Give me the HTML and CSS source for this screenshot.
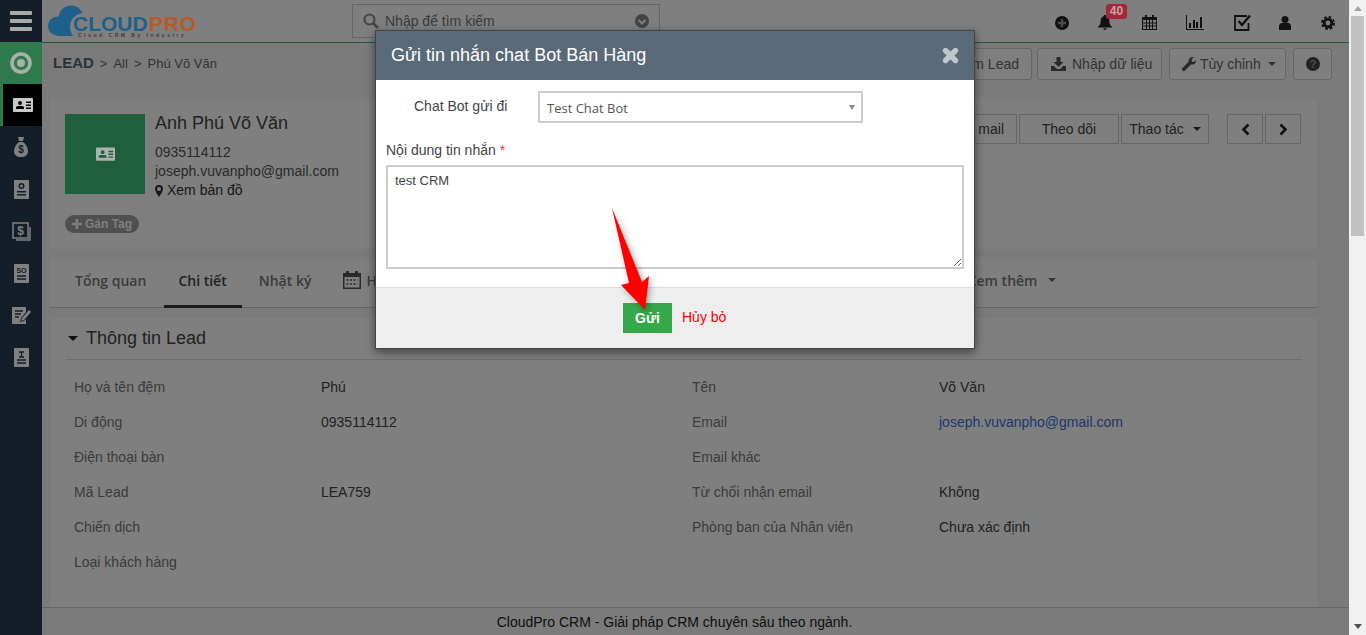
FILE: index.html
```html
<!DOCTYPE html>
<html lang="vi">
<head>
    <meta charset="UTF-8">
    <meta name="viewport" content="width=device-width, initial-scale=1.0">
    <title>CloudPro CRM - Lead</title>
    <link rel="stylesheet" href="styles.css">
</head>
<body>
<div class="app">
    <aside class="sidebar">
        <div class="side-item">
            <svg width="22" height="20" viewBox="0 0 22 20"><g fill="#a9a9a9"><rect y="0" width="22" height="4" rx="1"/><rect y="8" width="22" height="4" rx="1"/><rect y="16" width="22" height="4" rx="1"/></g></svg>
        </div>
        <div class="side-item side-home">
            <svg width="22" height="22" viewBox="0 0 22 22"><circle cx="11" cy="11" r="9" fill="none" stroke="#a9b0aa" stroke-width="3.6"/><circle cx="11" cy="11" r="4" fill="#a9b0aa"/></svg>
        </div>
        <div class="side-item side-active">
            <svg width="20" height="15" viewBox="0 0 20 15"><path fill="#c9c9c9" fill-rule="evenodd" d="M1 0h18a1 1 0 0 1 1 1v12a1 1 0 0 1-1 1H1a1 1 0 0 1-1-1V1a1 1 0 0 1 1-1zm6 3a2 2 0 1 0 0 4 2 2 0 0 0 0-4zM3 11h8V9.500Q11 8 9 8H5Q3 8 3 9.500zm10-7.500v1.500h5V3.500zm0 3v1.500h5V6.500zm0 3v1.500h5V9.500z"/></svg>
        </div>
        <div class="side-item">
            <svg width="14" height="20" viewBox="0 0 14 20"><path fill="#808080" d="M4 0h6L9 4H5zM5 5h4c3 2 5 6 5 9 0 4-3 6-7 6s-7-2-7-6c0-3 2-7 5-9z"/><text x="7" y="16" text-anchor="middle" class="side-glyph">$</text></svg>
        </div>
        <div class="side-item">
            <svg width="15" height="19" viewBox="0 0 15 19"><path fill="#808080" fill-rule="evenodd" d="M1 0h13a1 1 0 0 1 1 1v17a1 1 0 0 1-1 1H1a1 1 0 0 1-1-1V1a1 1 0 0 1 1-1zm6.500 3a3 3 0 1 0 0 6 3 3 0 0 0 0-6zm0 1.500a1.500 1.500 0 1 1 0 3 1.500 1.500 0 0 1 0-3zM3 11v1.500h9V11zm0 3v1.500h9V14z"/></svg>
        </div>
        <div class="side-item">
            <svg width="19" height="19" viewBox="0 0 19 19"><path fill="none" stroke="#808080" stroke-width="1.500" d="M1 1h15v15H1zM18 5v13H4"/><text x="8.500" y="13" text-anchor="middle" class="side-glyph side-glyph-big">$</text></svg>
        </div>
        <div class="side-item">
            <svg width="15" height="19" viewBox="0 0 15 19"><rect width="15" height="19" rx="1" fill="#808080"/><text x="7.500" y="9" text-anchor="middle" class="side-glyph side-glyph-so">SO</text><path stroke="#141e28" stroke-width="1.300" d="M3 12h9M3 15h9"/></svg>
        </div>
        <div class="side-item">
            <svg width="19" height="18" viewBox="0 0 19 18"><path fill="#808080" d="M0 1h14v5l-5 6-1 4 4-1 2-2v5H0z"/><path fill="#808080" d="M10 12l7-8 2 2-7 8-3 1z"/><path stroke="#141e28" stroke-width="1.300" d="M3 5h8M3 8h6M3 11h4"/></svg>
        </div>
        <div class="side-item">
            <svg width="15" height="19" viewBox="0 0 15 19"><rect width="15" height="19" rx="1" fill="#808080"/><path stroke="#141e28" stroke-width="1.300" d="M5 4h5M7.500 4v5M5 9h5M3 12h9M3 15h9"/></svg>
        </div>
    </aside>

    <div class="main">
        <header class="topbar">
            <div class="logo">
                <svg class="logo-cloud" width="44" height="32" viewBox="0 0 44 32"><g fill="#1f5f8c"><circle cx="9.500" cy="21" r="9.500"/><circle cx="23" cy="13" r="12.500"/><rect x="9" y="18" width="22" height="13"/></g><circle cx="36" cy="22" r="14" fill="#7f7f7f"/></svg>
                <div class="logo-text"><span class="logo-cloud-word">CLOUD</span><span class="logo-pro">PRO</span></div>
                <div class="logo-sub">Cloud CRM By Industry</div>
            </div>
            <div class="search">
                <svg width="16" height="16" viewBox="0 0 16 16"><circle cx="6.500" cy="6.500" r="5" fill="none" stroke="#8a8a8a" stroke-width="2.200"/><path stroke="#8a8a8a" stroke-width="2.800" d="M10.500 10.500l4.500 4.500"/></svg>
                <span class="search-text">Nhập để tìm kiếm</span>
                <svg width="14" height="14" viewBox="0 0 14 14"><circle cx="7" cy="7" r="7" fill="#888"/><path fill="none" stroke="#fff" stroke-width="2" d="M3.500 6L7 9.500 10.500 6"/></svg>
            </div>
            <div class="top-icons">
                <span class="top-icon"><svg width="14" height="14" viewBox="0 0 14 14"><circle cx="7" cy="7" r="7" fill="#222"/><path stroke="#999" stroke-width="2.400" d="M3 7h8M7 3v8"/></svg></span>
                <span class="top-icon top-bell">
                    <svg width="14" height="15" viewBox="0 0 15 16"><path fill="#222" d="M7.500 0C8.300 0 9 .6 9 1.400c2.200.7 3.200 2.700 3.200 5 0 3.600 1.200 4.800 2.800 6.100v.8H0v-.8c1.600-1.300 2.800-2.500 2.800-6.100 0-2.300 1-4.300 3.200-5C6 .6 6.700 0 7.500 0zM5.700 14.200h3.600a1.800 1.800 0 0 1-3.600 0z"/></svg>
                    <span class="badge">40</span>
                </span>
                <span class="top-icon top-cal"><svg width="15" height="15" viewBox="0 0 15 15"><path fill="#222" fill-rule="evenodd" d="M3 0h2v2h5V0h2v2h3v13H0V2h3zM1 5v9h13V5z"/><path stroke="#222" d="M1 8h13M1 11h13M4.500 5v9M7.500 5v9M10.500 5v9"/></svg></span>
                <span class="top-icon top-chart"><svg width="18" height="15" viewBox="0 0 18 15"><path fill="#222" d="M0 0h1v14h17v1H0zM3 8h2v5H3zM7 5h2v8H7zM10 7h2v6h-2zM14 2h2v11h-2z"/></svg></span>
                <span class="top-icon top-check"><svg width="17" height="17" viewBox="0 0 17 17"><path fill="none" stroke="#222" stroke-width="1.800" d="M14.500 9v7H1V2h12"/><path fill="none" stroke="#222" stroke-width="2.400" d="M4.500 7l3.500 4L16 1.500"/></svg></span>
                <span class="top-icon"><svg width="12" height="14" viewBox="0 0 12 14"><circle cx="6" cy="3.500" r="3.500" fill="#222"/><path fill="#222" d="M0 14v-3.500C0 8.500 1.500 7 3 7h6c1.500 0 3 1.500 3 3.500V14z"/></svg></span>
                <span class="top-icon"><svg width="14" height="14" viewBox="0 0 14 14"><circle cx="7" cy="7" r="3.800" fill="none" stroke="#222" stroke-width="2.800"/><circle cx="7" cy="7" r="6" fill="none" stroke="#222" stroke-width="2" stroke-dasharray="2.600 2.110"/></svg></span>
            </div>
        </header>

        <div class="page-head">
            <div class="crumbs">
                <b>LEAD</b><span class="sep">&gt;</span><span>All</span><span class="sep">&gt;</span><span>Phú Võ Văn</span>
            </div>
            <div class="head-actions">
                <button class="btn btn-add">Thêm Lead</button>
                <button class="btn btn-import">
                    <svg width="15" height="14" viewBox="0 0 15 14"><path fill="#555" d="M5.500 0h4v5h3L7.500 10 2.500 5h3zM0 9h3l3 3h3l3-3h3v5H0z"/></svg>
                    Nhập dữ liệu
                </button>
                <button class="btn btn-custom">
                    <svg width="14" height="14" viewBox="0 0 14 14"><path fill="#555" d="M13.800 3.200c.5 2-.9 4.300-3.200 4.300-.5 0-.9-.1-1.300-.2L3 13.500c-.8.700-1.900.7-2.500 0-.7-.7-.7-1.700 0-2.500l6.200-6.200C6.100 2.500 8 0 10.500 0c.5 0 .9.100 1.300.2L9.500 2.600l.5 1.900 1.900.5z"/></svg>
                    Tùy chỉnh <i class="caret"></i>
                </button>
                <button class="btn btn-help">
                    <svg width="14" height="14" viewBox="0 0 14 14"><circle cx="7" cy="7" r="7" fill="#444"/><text x="7" y="11" text-anchor="middle" class="help-glyph">?</text></svg>
                </button>
            </div>
        </div>

        <section class="summary">
            <div class="summary-top">
                <div class="avatar">
                    <svg class="avatar-icon" width="19" height="15" viewBox="0 0 20 15"><path fill="#a8b4ae" fill-rule="evenodd" d="M1 0h18a1 1 0 0 1 1 1v12a1 1 0 0 1-1 1H1a1 1 0 0 1-1-1V1a1 1 0 0 1 1-1zm6 3a2 2 0 1 0 0 4 2 2 0 0 0 0-4zM3 11h8V9.500Q11 8 9 8H5Q3 8 3 9.500zm10-7.500v1.500h5V3.500zm0 3v1.500h5V6.500zm0 3v1.500h5V9.500z"/></svg>
                </div>
                <div class="person">
                    <div class="person-name">Anh Phú Võ Văn</div>
                    <div class="person-line">0935114112</div>
                    <div class="person-line">joseph.vuvanpho@gmail.com</div>
                    <div class="person-line person-map">
                        <svg width="8" height="12" viewBox="0 0 8 12"><path fill="#333" fill-rule="evenodd" d="M4 0a4 4 0 0 1 4 4c0 2-2 5-4 8-2-3-4-6-4-8a4 4 0 0 1 4-4zm0 2a2 2 0 1 0 0 4 2 2 0 0 0 0-4z"/></svg>
                        Xem bản đồ
                    </div>
                </div>
                <div class="summary-actions">
                    <button class="btn btn-sm">Gửi mail</button>
                    <button class="btn btn-sm btn-follow">Theo dõi</button>
                    <button class="btn btn-sm btn-more">Thao tác <i class="caret caret-dark"></i></button>
                    <div class="pager">
                        <button class="btn btn-sm btn-page"><svg width="9" height="13" viewBox="0 0 9 13"><path fill="none" stroke="#222" stroke-width="2.600" d="M7.500 1.500l-5 5 5 5"/></svg></button>
                        <button class="btn btn-sm btn-page"><svg width="9" height="13" viewBox="0 0 9 13"><path fill="none" stroke="#222" stroke-width="2.600" d="M1.500 1.500l5 5-5 5"/></svg></button>
                    </div>
                </div>
            </div>
            <span class="tag-pill">
                <svg width="10" height="10" viewBox="0 0 10 10"><path stroke="#fff" stroke-width="2.600" d="M0 5h10M5 0v10"/></svg>
                Gán Tag
            </span>
        </section>

        <nav class="tabs">
            <a class="tab">Tổng quan</a>
            <a class="tab tab-active">Chi tiết</a>
            <a class="tab tab-log">Nhật ký</a>
            <a class="tab tab-icon">
                <svg width="18" height="18" viewBox="0 0 18 18"><path fill="#555" fill-rule="evenodd" d="M3 0h3v2h6V0h3v2h3v16H0V2h3zM1.500 6v10.500h15V6z"/><path stroke="#555" stroke-width="1.600" stroke-dasharray="2 1.500" d="M3.500 9h11M3.500 13h11"/></svg>
                Hoạt động
            </a>
            <a class="tab tab-last">Xem thêm <i class="caret"></i></a>
        </nav>

        <section class="card">
            <h2 class="card-title"><i class="caret caret-title"></i>Thông tin Lead</h2>
            <div class="fields">
                <span class="f-label">Họ và tên đệm</span><span class="f-value">Phú</span>
                <span class="f-label">Tên</span><span class="f-value">Võ Văn</span>
                <span class="f-label">Di động</span><span class="f-value">0935114112</span>
                <span class="f-label">Email</span><span class="f-value f-link">joseph.vuvanpho@gmail.com</span>
                <span class="f-label">Điện thoại bàn</span><span class="f-value"></span>
                <span class="f-label">Email khác</span><span class="f-value"></span>
                <span class="f-label">Mã Lead</span><span class="f-value">LEA759</span>
                <span class="f-label">Từ chối nhận email</span><span class="f-value">Không</span>
                <span class="f-label">Chiến dịch</span><span class="f-value"></span>
                <span class="f-label">Phòng ban của Nhân viên</span><span class="f-value">Chưa xác định</span>
                <span class="f-label">Loại khách hàng</span><span class="f-value"></span>
            </div>
        </section>

        <footer class="footer">CloudPro CRM - Giải pháp CRM chuyên sâu theo ngành.</footer>
        <div class="overlay"></div>
    </div>

    <div class="scrollbar">
        <i class="sb-up"></i>
        <div class="sb-track"><div class="sb-thumb"></div></div>
        <i class="sb-down"></i>
    </div>

    <div class="modal">
        <div class="modal-head">
            <span>Gửi tin nhắn chat Bot Bán Hàng</span>
            <svg width="17" height="17" viewBox="0 0 17 17"><path stroke="#bfc6cc" stroke-width="5.400" stroke-linecap="round" d="M3.500 3.500l10 10M13.500 3.500l-10 10"/></svg>
        </div>
        <div class="modal-body">
            <div class="bot-row">
                <label class="bot-label">Chat Bot gửi đi</label>
                <div class="fake-select">Test Chat Bot<i class="select-arrow"></i></div>
            </div>
            <label class="msg-label">Nội dung tin nhắn <em>*</em></label>
            <textarea class="msg-input">test CRM</textarea>
        </div>
        <div class="modal-foot">
            <button class="btn-send">Gửi</button>
            <a class="cancel">Hủy bỏ</a>
        </div>
    </div>

    <svg class="arrow" width="60" height="125" viewBox="0 0 60 125"><path fill="#ff0000" d="M5 3 L35 77 L42 71 L38 105 L14 80 L22 78 Z"/></svg>
</div>
</body>
</html>
```

FILE: styles.css
```css
* { box-sizing: border-box; }
html, body { margin: 0; padding: 0; height: 100%; overflow: hidden; }
body { font-family: "Liberation Sans", Arial, sans-serif; font-size: 14px; color: #333; background: #f7f7f7; }
i, em { font-style: normal; }

.app { position: relative; display: flex; width: 1366px; height: 635px; overflow: hidden; }

/* sidebar */
.sidebar { width: 42px; flex: none; background: #141e28; }
.side-item { height: 42px; display: flex; align-items: center; justify-content: center; }
.side-home { background: #2f7a4c; }
.side-active { background: #000; border-left: 3px solid #2f7a4c; }
.side-glyph { font: bold 10px "Liberation Sans", sans-serif; fill: #141e28; }
.side-glyph-big { font-size: 12px; fill: #808080; }
.side-glyph-so { font-size: 7px; }

/* main column */
.main { position: relative; flex: 1; min-width: 0; display: flex; flex-direction: column; background: #f7f7f7; }
.overlay { position: absolute; top: 0; left: 0; right: 0; bottom: 0; background: rgba(0, 0, 0, 0.5); z-index: 5; }

.topbar { height: 43px; flex: none; display: flex; align-items: center; background: #fff; border-bottom: 1px solid #3cb371; }
.logo { position: relative; z-index: 6; width: 310px; height: 42px; flex: none; }
.logo-cloud { position: absolute; left: 6px; top: 5px; }
.logo-text { position: absolute; left: 31px; top: 15px; font: bold 21px/18px "Liberation Sans", sans-serif; white-space: nowrap; }
.logo-cloud-word { color: #1f5f8c; }
.logo-pro { color: #b8592a; margin-left: 1px; letter-spacing: 1px; }
.logo-sub { position: absolute; left: 36px; top: 33px; font: bold 5px/5px "Liberation Sans", sans-serif; letter-spacing: 2.500px; color: #3c3c3c; white-space: nowrap; }

.search { width: 308px; height: 34px; margin-top: -1px; display: flex; align-items: center; padding: 0 10px; gap: 6px; background: #fff; border: 1px solid #ccc; }
.search-text { flex: 1; color: #777; font-size: 14px; }

.top-icons { margin-left: auto; display: flex; align-items: center; }
.top-icon { position: relative; width: 43px; height: 42px; padding-top: 3px; display: flex; align-items: center; justify-content: center; }
.top-bell, .top-cal { margin-right: 2px; }
.top-chart { margin-right: 5px; }
.top-check { margin-right: -1px; }
.badge { position: absolute; z-index: 6; left: 23px; top: 4px; width: 21px; height: 15px; border-radius: 3px; background: #a52838; color: #c8a4a8; font-size: 12px; font-weight: bold; line-height: 15px; text-align: center; }

.page-head { height: 56px; flex: none; display: flex; justify-content: space-between; padding: 5px 17px 0 11px; }
.crumbs { display: flex; align-items: baseline; padding-top: 6px; color: #666; font-size: 13px; }
.crumbs b { font-size: 15px; color: #566573; }
.crumbs .sep { margin: 0 6px; font-size: 13px; }
.head-actions { display: flex; gap: 7px; height: 32px; }

.btn { font-family: "Liberation Sans", sans-serif; font-size: 14px; color: #666; background: #fff; border: 1px solid #ccc; border-radius: 3px; height: 32px; padding: 0 12px; display: inline-flex; align-items: center; gap: 6px; white-space: nowrap; }
.btn-add { margin-right: -2px; }
.btn-import { width: 125px; padding: 0 0 0 13px; }
.btn-custom { width: 117px; padding: 0 0 0 12px; gap: 4px; }
.btn-help { width: 39px; padding: 0; justify-content: center; }
.btn-sm { height: 30px; color: #444; border-radius: 0; justify-content: center; }
.caret { display: inline-block; margin-left: 3px; border-top: 4px solid #666; border-left: 4px solid transparent; border-right: 4px solid transparent; }
.caret-dark { border-top-color: #333; }

/* lead summary */
.summary { flex: none; width: 1267px; height: 150px; margin-left: 8px; padding: 15px 16px 0 15px; background: #fff; }
.summary-top { display: flex; height: 80px; }
.avatar { width: 80px; height: 80px; flex: none; display: flex; align-items: center; justify-content: center; background: #3fbf7c; }
.avatar-icon { position: relative; z-index: 6; }
.person { margin-left: 10px; }
.person-name { font-size: 18px; line-height: 18px; margin-bottom: 11px; color: #444; }
.person-line { line-height: 19px; color: #555; }
.person-map { color: #333; display: flex; align-items: center; gap: 4px; }
.summary-actions { margin-left: auto; display: flex; gap: 2px; }
.btn-follow { width: 100px; }
.btn-more { width: 88px; margin-right: 16px; padding: 0 8px; }
.pager { display: flex; gap: 2px; }
.btn-page { width: 36px; padding: 0; }
.tag-pill { display: inline-flex; align-items: center; gap: 3px; height: 18px; margin-top: 21px; padding: 0 7px; border-radius: 9px; background: #a0a0a0; color: #fff; font-size: 12px; font-weight: bold; }

/* tabs */
.tabs { flex: none; width: 1267px; height: 49px; margin: 10px 0 0 8px; padding-left: 9px; display: flex; align-items: stretch; background: #fff; border-bottom: 1px solid #ccc; font-family: "Open Sans", sans-serif; font-weight: 600; font-size: 14px; color: #777; }
.tab { display: flex; align-items: center; gap: 5px; padding: 0 16px 4px; border-bottom: 3px solid transparent; height: 49px; }
.tab-active { color: #444; border-bottom-color: #333; margin-left: 2px; padding: 0 15px 4px 14px; }
.tab-log { padding: 0 16px 4px 17px; }
.tab-icon { padding-right: 0; }
.tab-last { margin-left: 515px; }
.tab-last .caret { margin-left: 6px; }

/* detail card */
.card { flex: 1; width: 1266px; margin: 10px 0 0 9px; padding: 0 15px; background: #fff; }
.card-title { margin: 0; height: 42px; display: flex; align-items: center; font-size: 18px; font-weight: normal; color: #444; border-bottom: 1px solid #ddd; }
.caret-title { margin: 0 8px 0 2px; border-top: 5px solid #222; border-left: 5px solid transparent; border-right: 5px solid transparent; }
.fields { display: grid; grid-template-columns: 247px 371px 247px 1fr; grid-auto-rows: 35px; margin-top: 9px; padding-left: 8px; align-items: center; }
.f-label { color: #777; }
.f-value { color: #444; }
.f-link { color: #3a6fd8; }

.footer { flex: none; height: 28px; padding-right: 42px; text-align: center; line-height: 28px; color: #222; border-top: 1px solid #ccc; background: #f7f7f7; }

/* scrollbar */
.scrollbar { width: 17px; flex: none; display: flex; flex-direction: column; align-items: center; background: #f1f1f1; }
.sb-up { margin: 6px 0 5px; border-bottom: 5px solid #a3a3a3; border-left: 4px solid transparent; border-right: 4px solid transparent; }
.sb-track { flex: 1; width: 13px; }
.sb-thumb { width: 13px; height: 220px; background: #c1c1c1; }
.sb-down { margin-bottom: 6px; border-top: 5px solid #505050; border-left: 4px solid transparent; border-right: 4px solid transparent; }

/* dialog */
.modal { position: absolute; z-index: 10; left: 375px; top: 30px; width: 600px; height: 319px; display: flex; flex-direction: column; background: #fff; border: 1px solid #444; box-shadow: 0 3px 9px rgba(0, 0, 0, 0.5); }
.modal-head { height: 49px; flex: none; display: flex; align-items: center; justify-content: space-between; padding: 0 15px; background: #5a6a78; color: #fff; font-size: 18px; }
.modal-body { flex: 1; padding: 11px 10px 0; }
.bot-row { display: flex; align-items: flex-start; height: 32px; }
.bot-label { width: 152px; padding: 7px 0 0 28px; color: #444; white-space: nowrap; }
.fake-select { position: relative; width: 325px; height: 32px; border: 2px solid #ccc; padding-left: 7px; font: 13px/30px "Open Sans", sans-serif; color: #555; }
.select-arrow { position: absolute; right: 6px; top: 12px; border-top: 5px solid #888; border-left: 3px solid transparent; border-right: 3px solid transparent; }
.msg-label { display: block; margin-top: 19px; line-height: 16px; color: #444; }
.msg-label em { color: #e33; }
.msg-input { display: block; width: 578px; height: 104px; margin-top: 7px; padding: 6px 7px; border: 2px solid #ccc; border-radius: 0; outline: 0; font: 13px "Liberation Sans", sans-serif; color: #444; }
.modal-foot { height: 61px; flex: none; display: flex; align-items: center; padding: 0 0 0 247px; gap: 10px; background: #eee; border-top: 1px solid #ddd; }
.btn-send { width: 49px; height: 30px; border: 0; background: #34a84a; color: #fff; font: bold 14px "Liberation Sans", sans-serif; }
.cancel { color: #f00; padding-bottom: 2px; }

.arrow { position: absolute; z-index: 11; left: 607px; top: 205px; filter: drop-shadow(2px 2px 3px rgba(0, 0, 0, 0.35)); }
.help-glyph { font: bold 11px "Liberation Sans", sans-serif; fill: #999; }
```
